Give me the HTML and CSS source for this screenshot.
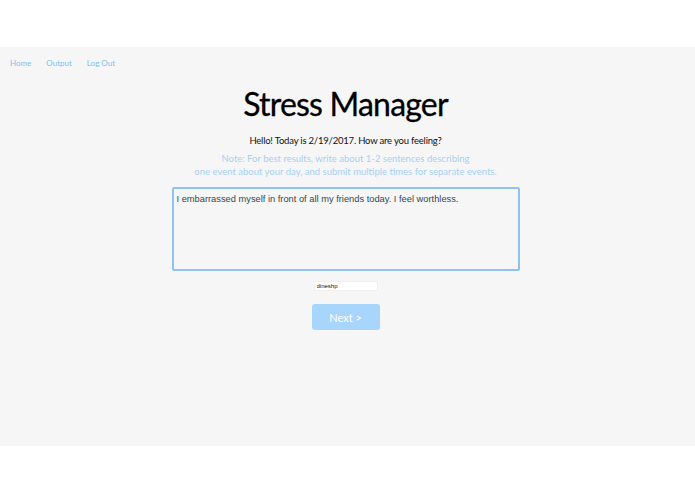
FILE: index.html
```html
<!DOCTYPE html>
<html lang="en">
  <head>
    <meta charset="UTF-8" />
    <meta name="viewport" content="width=device-width, initial-scale=1.0" />
    <title>Stress Manager</title>
    <link rel="stylesheet" href="styles.css">
  </head>
  <body>
    <div class="top-band"></div>
    <div class="page">
      <nav class="nav">
        <a href="#">Home</a>
        <a href="#">Output</a>
        <a href="#">Log Out</a>
      </nav>
      <main class="content">
        <h1 class="title">Stress Manager</h1>
        <p class="greeting">Hello! Today is 2/19/2017. How are you feeling?</p>
        <p class="note">
          Note: For best results, write about 1-2 sentences describing<br />one event about your day, and submit multiple times for separate events.
        </p>
        <textarea class="entry">I embarrassed myself in front of all my friends today. I feel worthless.</textarea>
        <input class="user" type="text" value="dineshp" />
        <button class="next">Next &gt;</button>
      </main>
    </div>
  </body>
</html>
```

FILE: styles.css
```css
body {
  margin: 0;
  background: #fff;
  font-family: Lato, "Open Sans", sans-serif;
}

.top-band {
  height: 47px;
}

.page {
  height: 399px;
  background: #f6f6f6;
  display: flex;
  flex-direction: column;
}

.nav {
  display: flex;
  gap: 15px;
  padding: 11px 10px 0;
  font-size: 8px;
}

.nav a {
  color: #7ebdf0;
  text-decoration: none;
}

.content {
  display: flex;
  flex-direction: column;
  align-items: center;
  padding-right: 4px;
}

.title {
  margin: 16px 0 0;
  font-size: 32px;
  font-weight: 400;
  color: #000;
  letter-spacing: -0.8px;
  -webkit-text-stroke: 0.3px #000;
}

.greeting {
  margin: 12px 0 0;
  font-size: 9.5px;
  letter-spacing: -0.2px;
  color: #111;
}

.note {
  margin: 6px 0 0;
  font-size: 9.5px;
  line-height: 13px;
  color: #a6d0f3;
  text-align: center;
}

.entry {
  margin-top: 9px;
  width: 338px;
  height: 72px;
  padding: 5px 3px 3px;
  border: 2px solid #8ec2f3;
  border-radius: 2px;
  background: #f6f6f6;
  font-family: "Liberation Sans", Arial, sans-serif;
  font-size: 9.3px;
  color: #34474e;
  resize: none;
  outline: none;
}

.user {
  margin-top: 10px;
  width: 58px;
  height: 8px;
  padding: 0 2px;
  border: 1px solid #f0f0f0;
  background: #fff;
  font-family: "Liberation Sans", Arial, sans-serif;
  font-size: 6px;
  color: #111;
}

.next {
  margin-top: 13px;
  width: 68px;
  height: 26px;
  border: none;
  border-radius: 3px;
  background: #a8d5fb;
  color: #fff;
  font-family: Lato, sans-serif;
  font-size: 11px;
}
```
